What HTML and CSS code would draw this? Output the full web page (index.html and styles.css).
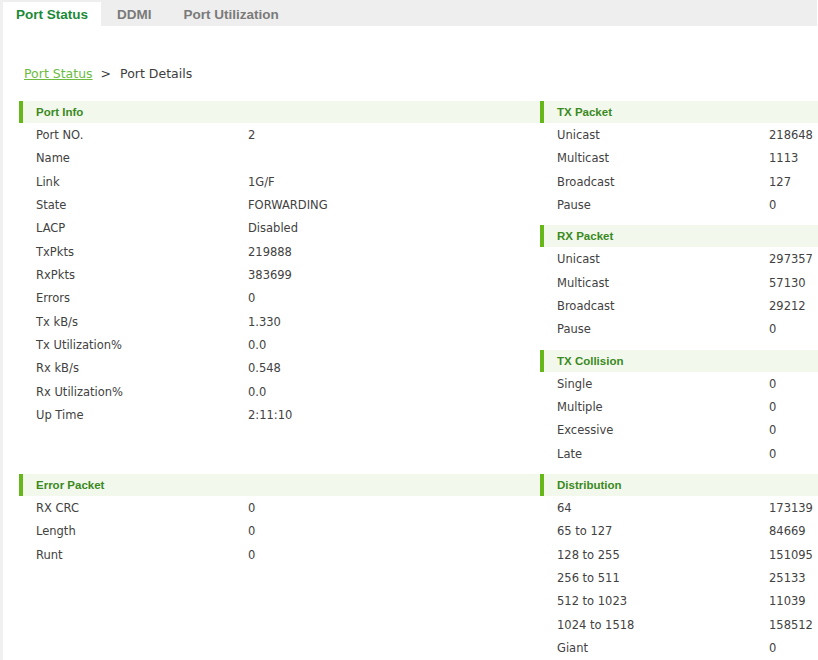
FILE: index.html
```html
<!DOCTYPE html>
<html lang="en">
<head>
	<meta charset="UTF-8">
	<title>Port Details</title>
	<link rel="stylesheet" href="styles.css">
</head>
<body>
	<div class="page">
		<div class="tabs">
			<div class="tab active">Port Status</div>
			<div class="tab">DDMI</div>
			<div class="tab">Port Utilization</div>
		</div>

		<div class="crumb">
			<a href="#">Port Status</a><span class="sep">&gt;</span><span>Port Details</span>
		</div>

		<div class="grid">
			<div class="col">
				<div class="section">
					<div class="sec-title">Port Info</div>
					<div class="row"><span class="label">Port NO.</span><span>2</span></div>
					<div class="row"><span class="label">Name</span><span></span></div>
					<div class="row"><span class="label">Link</span><span>1G/F</span></div>
					<div class="row"><span class="label">State</span><span>FORWARDING</span></div>
					<div class="row"><span class="label">LACP</span><span>Disabled</span></div>
					<div class="row"><span class="label">TxPkts</span><span>219888</span></div>
					<div class="row"><span class="label">RxPkts</span><span>383699</span></div>
					<div class="row"><span class="label">Errors</span><span>0</span></div>
					<div class="row"><span class="label">Tx kB/s</span><span>1.330</span></div>
					<div class="row"><span class="label">Tx Utilization%</span><span>0.0</span></div>
					<div class="row"><span class="label">Rx kB/s</span><span>0.548</span></div>
					<div class="row"><span class="label">Rx Utilization%</span><span>0.0</span></div>
					<div class="row"><span class="label">Up Time</span><span>2:11:10</span></div>
				</div>
			</div>

			<div class="col">
				<div class="section">
					<div class="sec-title">TX Packet</div>
					<div class="row"><span class="label">Unicast</span><span>218648</span></div>
					<div class="row"><span class="label">Multicast</span><span>1113</span></div>
					<div class="row"><span class="label">Broadcast</span><span>127</span></div>
					<div class="row"><span class="label">Pause</span><span>0</span></div>
				</div>
				<div class="section">
					<div class="sec-title">RX Packet</div>
					<div class="row"><span class="label">Unicast</span><span>297357</span></div>
					<div class="row"><span class="label">Multicast</span><span>57130</span></div>
					<div class="row"><span class="label">Broadcast</span><span>29212</span></div>
					<div class="row"><span class="label">Pause</span><span>0</span></div>
				</div>
				<div class="section">
					<div class="sec-title">TX Collision</div>
					<div class="row"><span class="label">Single</span><span>0</span></div>
					<div class="row"><span class="label">Multiple</span><span>0</span></div>
					<div class="row"><span class="label">Excessive</span><span>0</span></div>
					<div class="row"><span class="label">Late</span><span>0</span></div>
				</div>
			</div>

			<div class="col">
				<div class="section">
					<div class="sec-title">Error Packet</div>
					<div class="row"><span class="label">RX CRC</span><span>0</span></div>
					<div class="row"><span class="label">Length</span><span>0</span></div>
					<div class="row"><span class="label">Runt</span><span>0</span></div>
				</div>
			</div>

			<div class="col">
				<div class="section">
					<div class="sec-title">Distribution</div>
					<div class="row"><span class="label">64</span><span>173139</span></div>
					<div class="row"><span class="label">65 to 127</span><span>84669</span></div>
					<div class="row"><span class="label">128 to 255</span><span>151095</span></div>
					<div class="row"><span class="label">256 to 511</span><span>25133</span></div>
					<div class="row"><span class="label">512 to 1023</span><span>11039</span></div>
					<div class="row"><span class="label">1024 to 1518</span><span>158512</span></div>
					<div class="row"><span class="label">Giant</span><span>0</span></div>
				</div>
			</div>
		</div>
	</div>
</body>
</html>
```

FILE: styles.css
```css
* {
	box-sizing: border-box;
}

body {
	margin: 0;
	background: #fff;
	font-family: "DejaVu Sans", sans-serif;
	color: #3d3d3d;
}

.page {
	border-left: 3px solid #f0f0f0;
	min-height: 660px;
	overflow: hidden;
}

/* top tabs */
.tabs {
	display: flex;
	height: 26px;
	margin-right: 1px;
	background: #eeeeee;
}

.tab {
	padding: 3px 16px 0;
	font-family: "Liberation Sans", Arial, sans-serif;
	font-weight: bold;
	font-size: 13.5px;
	line-height: 23px;
	color: #7a7a7a;
}

.tab.active {
	margin-top: 2px;
	padding: 1px 13px 0 13px;
	line-height: 23px;
	background: #fff;
	color: #1b8a37;
}

/* breadcrumb */
.crumb {
	padding: 39px 0 0 21px;
	height: 76px;
	font-size: 12.5px;
	line-height: 18px;
	color: #3d3d3d;
}

.crumb a {
	color: #6dbb3f;
	text-decoration: underline;
}

.crumb .sep {
	margin: 0 9px 0 8px;
}

/* the two columns */
.grid {
	display: grid;
	grid-template-columns: 521px 1fr;
	margin-left: 16px;
	margin-top: -1px;
}

.section {
	margin-bottom: 9px;
}

.sec-title {
	height: 22px;
	padding-left: 13px;
	border-left: 4px solid #66b81a;
	background: #f2f8eb;
	font-family: "Liberation Sans", Arial, sans-serif;
	font-weight: bold;
	font-size: 11.5px;
	line-height: 22px;
	color: #3a8a1f;
}

.row {
	display: flex;
	height: 23.33px;
	padding-left: 17px;
	padding-top: 1px;
	font-size: 11.5px;
	line-height: 22.33px;
	color: #424242;
}

.row .label {
	width: 212px;
	flex-shrink: 0;
}
```
